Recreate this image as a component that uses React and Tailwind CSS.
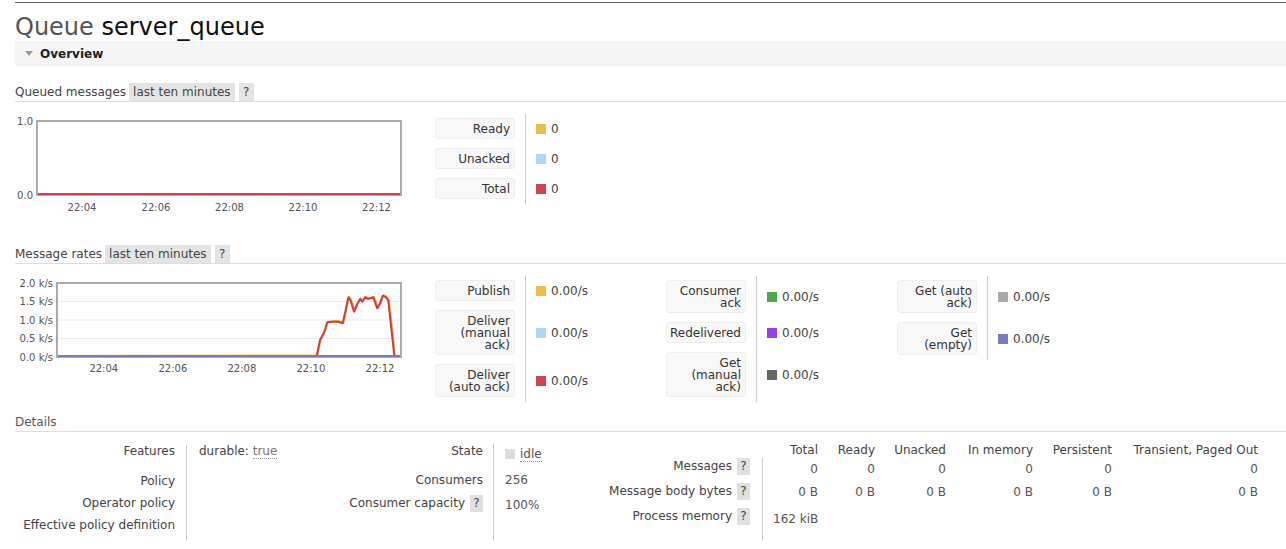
import React from 'react';

const queuedRows = [
  { label: 'Ready', color: 'bg-[#efbd4b]', value: '0' },
  { label: 'Unacked', color: 'bg-[#afd8f8]', value: '0' },
  { label: 'Total', color: 'bg-[#cf4350]', value: '0' },
];

const rateCols = [
  [
    { label: 'Publish', color: 'bg-[#efbd4b]', value: '0.00/s' },
    { label: <>Deliver<br />(manual<br />ack)</>, color: 'bg-[#afd8f8]', value: '0.00/s' },
    { label: <>Deliver<br />(auto ack)</>, color: 'bg-[#cf4350]', value: '0.00/s' },
  ],
  [
    { label: <>Consumer<br />ack</>, color: 'bg-[#4da74d]', value: '0.00/s' },
    { label: 'Redelivered', color: 'bg-[#9440ed]', value: '0.00/s' },
    { label: <>Get<br />(manual<br />ack)</>, color: 'bg-[#666666]', value: '0.00/s' },
  ],
  [
    { label: <>Get (auto<br />ack)</>, color: 'bg-[#aaaaaa]', value: '0.00/s' },
    { label: <>Get<br />(empty)</>, color: 'bg-[#7c79c3]', value: '0.00/s' },
  ],
];

// publish / deliver (auto ack) curve, in chart coords
const ratePts = [
  [301.7, 80], [305, 64], [309, 56.7], [312.3, 46.3], [318.3, 45.7], [323.3, 45.7],
  [327.7, 47.3], [330, 37.3], [333.3, 21.3], [335.7, 24.7], [339, 35.7], [342.3, 28],
  [345, 23], [347.3, 25.7], [350, 21.3], [353.3, 23], [358.3, 21.3], [362.3, 32.3],
  [365, 27.3], [367.7, 19.7], [371, 21.3], [373.3, 24.7], [379.3, 80],
];

const SectionHead = ({ title, tag }) => (
  <div className="flex h-[19px] items-center border-b border-[#ddd] text-[#444]">
    <span>{title}</span>
    {tag && (
      <>
        <span className="ml-[3px] flex h-full items-center bg-[#e4e4e4] px-[4px]">{tag}</span>
        <span className="ml-[4px] flex h-full w-[15px] items-center justify-center bg-[#e4e4e4]">?</span>
      </>
    )}
  </div>
);

const Help = () => (
  <span className="ml-[5px] inline-flex h-[17px] w-[13px] items-center justify-center bg-[#e0e0e0] text-[#444]">?</span>
);

const Legend = ({ rows }) => (
  <div className="flex w-[231px] shrink-0 flex-col">
    {rows.map((r, i) => (
      <div key={i} className="flex">
        <div className="w-[90px] shrink-0 pr-[10px] pt-[4px] pb-[5px]">
          <div className="rounded-[3px] border border-[#eee] bg-[#f8f8f8] py-[3.5px] pr-[4px] text-right leading-[12px] whitespace-nowrap text-[#333]">
            {r.label}
          </div>
        </div>
        <div className="flex flex-1 items-center border-l border-[#ccc] pl-[10px] text-[#444]">
          <span className={`mr-[5px] h-[10px] w-[10px] ${r.color}`} />
          {r.value}
        </div>
      </div>
    ))}
  </div>
);

const tick = 'fill-[#545454] text-[10px]';

const QueuedChart = () => {
  const xs = [67, 141, 214.5, 288, 361.5];
  const labels = ['22:04', '22:06', '22:08', '22:10', '22:12'];
  return (
    <svg width="420" height="90" className="shrink-0 overflow-visible">
      <rect x="22" y="7" width="364" height="74" fill="none" stroke="#aaa" strokeWidth="2" />
      <line x1="23" y1="80" x2="385" y2="80" stroke="#cf4350" strokeWidth="2" />
      <text x="18" y="10.6" textAnchor="end" className={tick}>1.0</text>
      <text x="18" y="84.6" textAnchor="end" className={tick}>0.0</text>
      {xs.map((x, i) => (
        <text key={i} x={x} y="96.5" textAnchor="middle" className={tick}>{labels[i]}</text>
      ))}
    </svg>
  );
};

const RatesChart = () => {
  const xs = [88.8, 157.9, 226.9, 295.9, 365];
  const labels = ['22:04', '22:06', '22:08', '22:10', '22:12'];
  const ys = ['2.0 k/s', '1.5 k/s', '1.0 k/s', '0.5 k/s', '0.0 k/s'];
  const line = 'M43,80 L' + ratePts.map(p => p.join(',')).join(' L') + ' L385,80';
  const under = 'M43,80 L' + ratePts.map(p => `${p[0] + 0.7},${p[1] - 0.6}`).join(' L') + ' L385,80';
  return (
    <svg width="420" height="100" className="shrink-0">
      {[25.5, 44, 62.5].map(y => (
        <line key={y} x1="42" y1={y} x2="386" y2={y} stroke="#ececec" strokeWidth="1" />
      ))}
      <rect x="42" y="7" width="344" height="74" fill="none" stroke="#aaa" strokeWidth="2" />
      <path d={under} fill="none" stroke="#efbd4b" strokeWidth="2" strokeLinejoin="round" />
      <path d={line} fill="none" stroke="#d03c44" strokeWidth="2" strokeLinejoin="round" />
      <line x1="43" y1="80" x2="385" y2="80" stroke="#7c79c3" strokeWidth="2" />
      {ys.map((t, i) => (
        <text key={t} x="38" y={7 + i * 18.5 + 3.6} textAnchor="end" className={tick}>{t}</text>
      ))}
      {xs.map((x, i) => (
        <text key={i} x={x} y="95.6" textAnchor="middle" className={tick}>{labels[i]}</text>
      ))}
    </svg>
  );
};

const colWidths = ['w-[55px]', 'w-[57px]', 'w-[71px]', 'w-[87px]', 'w-[79px]', 'w-[146px]'];
const heads = ['Total', 'Ready', 'Unacked', 'In memory', 'Persistent', 'Transient, Paged Out'];

const App = () => {
  return (
    <div className="h-[549px] w-full overflow-hidden bg-white font-['DejaVu_Sans',Verdana,sans-serif] text-[12px] text-[#444]">
      <div className="ml-[15px] mt-[2px] border-t border-[#666]">
        <h1 className="mt-[10px] text-[24px] leading-[28px] font-normal text-[#555]">
          Queue <span className="text-[#111]">server_queue</span>
        </h1>

        <div className="flex h-[25px] items-center bg-[#f5f5f5] pl-[10px]">
          <svg width="8" height="5" viewBox="0 0 8 5">
            <polygon points="0,0 8,0 4,5" fill="#999" />
          </svg>
          <span className="ml-[7px] font-bold text-[#222]">Overview</span>
        </div>

        <div className="mt-[17px]">
          <SectionHead title="Queued messages" tag="last ten minutes" />
          <div className="flex items-start pt-[12px]">
            <QueuedChart />
            <Legend rows={queuedRows} />
          </div>
        </div>

        <div className="mt-[41px]">
          <SectionHead title="Message rates" tag="last ten minutes" />
          <div className="flex items-start pt-[12px]">
            <RatesChart />
            {rateCols.map((rows, i) => (
              <Legend key={i} rows={rows} />
            ))}
          </div>
        </div>

        <div className="mt-[11px]">
          <div className="flex h-[19px] items-center border-b border-[#ddd] text-[#555]">Details</div>
          <div className="flex">
            {/* features / policies */}
            <div className="flex w-[285px] shrink-0 pt-[13px]">
              <div className="w-[171px] shrink-0 pr-[11px] pb-[4px] text-right">
                <div className="h-[25px] leading-[12px]">Features</div>
                <div className="h-[22px] leading-[22px]">Policy</div>
                <div className="h-[22px] leading-[22px]">Operator policy</div>
                <div className="h-[22px] leading-[22px]">Effective policy definition</div>
              </div>
              <div className="flex-1 border-l border-[#ccc] pl-[12px] leading-[12px]">
                durable: <span className="border-b border-dotted border-[#999] text-[#777]">true</span>
              </div>
            </div>

            {/* state / consumers */}
            <div className="flex w-[260px] shrink-0 pt-[12px]">
              <div className="w-[193px] shrink-0 pr-[10px] text-right">
                <div className="h-[25px] leading-[14px]">State</div>
                <div className="h-[25px] pt-[4px] leading-[14px]">Consumers</div>
                <div className="flex h-[28px] items-start justify-end pt-[1px] leading-[17px]">
                  Consumer capacity<Help />
                </div>
              </div>
              <div className="flex-1 border-l border-[#ccc] pl-[11px] text-[#555]">
                <div className="flex h-[25px] items-start pt-[3px] leading-[14px]">
                  <span className="mr-[5px] mt-[2px] h-[10px] w-[10px] bg-[#ddd]" />
                  <span className="border-b border-dotted border-[#999]">idle</span>
                </div>
                <div className="h-[25px] pt-[4px] leading-[14px]">256</div>
                <div className="h-[28px] pt-[3px] leading-[17px]">100%</div>
              </div>
            </div>

            {/* message counts */}
            <div className="shrink-0 pt-[9px]">
              <div className="flex h-[17px] items-center">
                <div className="w-[203px] shrink-0" />
                {heads.map((h, i) => (
                  <div key={h} className={`${colWidths[i]} shrink-0 text-right`}>{h}</div>
                ))}
              </div>
              <div className="flex">
                <div className="w-[202px] shrink-0 pr-[12px]">
                  <div className="flex h-[25px] items-start justify-end leading-[17px]">Messages<Help /></div>
                  <div className="flex h-[25px] items-start justify-end leading-[17px]">Message body bytes<Help /></div>
                  <div className="flex h-[32px] items-start justify-end leading-[17px]">Process memory<Help /></div>
                </div>
                <div className="border-l border-[#ccc] text-[#555]">
                  <div className="flex h-[25px] pt-[4px] leading-[14px]">
                    {colWidths.map(w => (
                      <div key={w} className={`${w} shrink-0 text-right`}>0</div>
                    ))}
                  </div>
                  <div className="flex h-[25px] pt-[2px] leading-[14px]">
                    {colWidths.map(w => (
                      <div key={w} className={`${w} shrink-0 text-right`}>0 B</div>
                    ))}
                  </div>
                  <div className="h-[32px] pl-[10px] pt-[4px] leading-[14px]">162 kiB</div>
                </div>
              </div>
            </div>
          </div>
        </div>
      </div>
    </div>
  );
};

export default App;
